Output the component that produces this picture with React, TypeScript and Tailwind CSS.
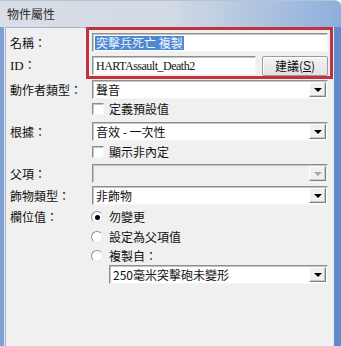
import type { ReactNode } from "react";

const sunken =
  "border-t border-l border-t-[#8e8f8f] border-l-[#8e8f8f] border-b border-r border-b-[#f5f5f5] border-r-[#f5f5f5] shadow-[inset_1px_1px_0_#c4c4c4]";

function DropButton({ disabled }: { disabled?: boolean }) {
  return (
    <div className="h-full w-[17px] flex items-center justify-center bg-[#f0f0f0] border-t border-l border-t-white border-l-white border-b border-r border-b-[#808080] border-r-[#808080] shadow-[inset_-1px_-1px_0_#c8c8c8]">
      <div
        className={
          disabled
            ? "w-0 h-0 border-x-[4px] border-x-transparent border-t-[4px] border-t-[#a8a8a8]"
            : "w-0 h-0 border-x-[4px] border-x-transparent border-t-[4px] border-t-black"
        }
      />
    </div>
  );
}

function Combo({ value, disabled }: { value?: string; disabled?: boolean }) {
  return (
    <div
      className={`flex-1 h-[19px] flex items-center ${sunken} ${
        disabled ? "bg-[#f0f0f0]" : "bg-white"
      }`}
    >
      <span className="flex-1 pl-[3px] leading-none whitespace-nowrap">{value}</span>
      <div className="h-full py-px pr-px">
        <DropButton disabled={disabled} />
      </div>
    </div>
  );
}

function Row({ label, children, className = "" }: { label?: ReactNode; children: ReactNode; className?: string }) {
  return (
    <div className={`flex items-center ${className}`}>
      <div className="w-[82px] shrink-0 leading-none whitespace-nowrap">{label}</div>
      <div className="flex-1 flex items-center">{children}</div>
    </div>
  );
}

function Check({ text }: { text: string }) {
  return (
    <div className="flex items-center gap-[5px]">
      <div className={`w-[12px] h-[12px] bg-white ${sunken}`} />
      <span className="leading-none">{text}</span>
    </div>
  );
}

function Radio({ text, checked }: { text: string; checked?: boolean }) {
  return (
    <div className="flex items-center gap-[6px] -ml-px">
      <div className="w-[12px] h-[12px] rounded-full bg-white border border-t-[#8e8f8f] border-l-[#8e8f8f] border-b-[#e6e6e6] border-r-[#e6e6e6] flex items-center justify-center">
        {checked && <div className="w-[5px] h-[5px] rounded-full bg-black" />}
      </div>
      <span className="leading-none">{text}</span>
    </div>
  );
}

export default function App() {
  return (
    <div className="relative w-[341px] h-[346px] overflow-hidden flex flex-col text-[12px] text-[#111] font-['Noto_Sans_CJK_TC',sans-serif]">
      <div className="h-[27px] shrink-0 flex items-center pl-[7px] bg-gradient-to-r from-[#d9dee5] via-[#d2dae4] to-[#8eafdc] border-t border-t-[#b6c3d3] rounded-tr-[6px]">
        <span className="text-[#2b2b2b] leading-none">物件屬性</span>
      </div>

      <div className="flex-1 flex min-h-0">
        <div className="w-[5px] bg-[#7ea0d2] border-r border-r-[#e4ebf4]" />

        <div className="flex-1 bg-[#f0f0f0] border-t border-l border-t-[#a9b4c2] border-l-[#a9b4c2] pl-[4px] pr-[5px] pt-[5px] flex flex-col">
          <Row label="名稱：" className="h-[19px]">
            <div className={`flex-1 h-[19px] bg-white flex items-center pl-[2px] ${sunken}`}>
              <span className="bg-[#4d88d0] text-[#eef4ff] leading-none py-[1px] px-[1px] whitespace-nowrap">
                突擊兵死亡 複製
              </span>
            </div>
          </Row>

          <Row
            label={
              <span>
                <span className="font-['Liberation_Serif',serif] text-[13px]">ID</span>：
              </span>
            }
            className="h-[19px] mt-[4px]"
          >
            <div className={`w-[164px] h-[19px] bg-white flex items-center pl-[3px] ${sunken}`}>
              <span className="font-['Liberation_Serif',serif] text-[12px] tracking-[-0.5px] leading-none whitespace-nowrap">
                HARTAssault_Death2
              </span>
            </div>
            <div className="ml-[6px] flex-1 h-[20px] bg-gradient-to-b from-[#f4f4f4] to-[#e2e2e2] border border-[#9a9a9a] rounded-[2px] shadow-[inset_1px_1px_0_#ffffff] flex items-center justify-center leading-none whitespace-nowrap">
              建議(<span className="font-['Liberation_Sans',sans-serif] underline">S</span>)
            </div>
          </Row>

          <Row label="動作者類型：" className="h-[19px] mt-[5px]">
            <Combo value="聲音" />
          </Row>

          <Row className="h-[16px] mt-[2px]">
            <Check text="定義預設值" />
          </Row>

          <Row label="根據：" className="h-[19px] mt-[5px]">
            <Combo value="音效 - 一次性" />
          </Row>

          <Row className="h-[16px] mt-[3px]">
            <Check text="顯示非內定" />
          </Row>

          <Row label="父項：" className="h-[19px] mt-[4px]">
            <Combo disabled />
          </Row>

          <Row label="飾物類型：" className="h-[19px] mt-[3px]">
            <Combo value="非飾物" />
          </Row>

          <Row label="欄位值：" className="h-[16px] mt-[4px]">
            <Radio text="勿變更" checked />
          </Row>

          <Row className="h-[16px] mt-[4px]">
            <Radio text="設定為父項值" />
          </Row>

          <Row className="h-[16px] mt-[3px]">
            <Radio text="複製自：" />
          </Row>

          <Row className="h-[19px] mt-[1px]">
            <div className="w-[17px] shrink-0" />
            <Combo value="250毫米突擊砲未變形" />
          </Row>
        </div>

        <div className="w-[8px] bg-[#5f8bcb] border-l border-l-[#e8eef6]" />
      </div>

      <div className="absolute left-[86px] top-[27px] w-[247px] h-[52px] border-[3px] border-[#c3313c]" />
    </div>
  );
}
